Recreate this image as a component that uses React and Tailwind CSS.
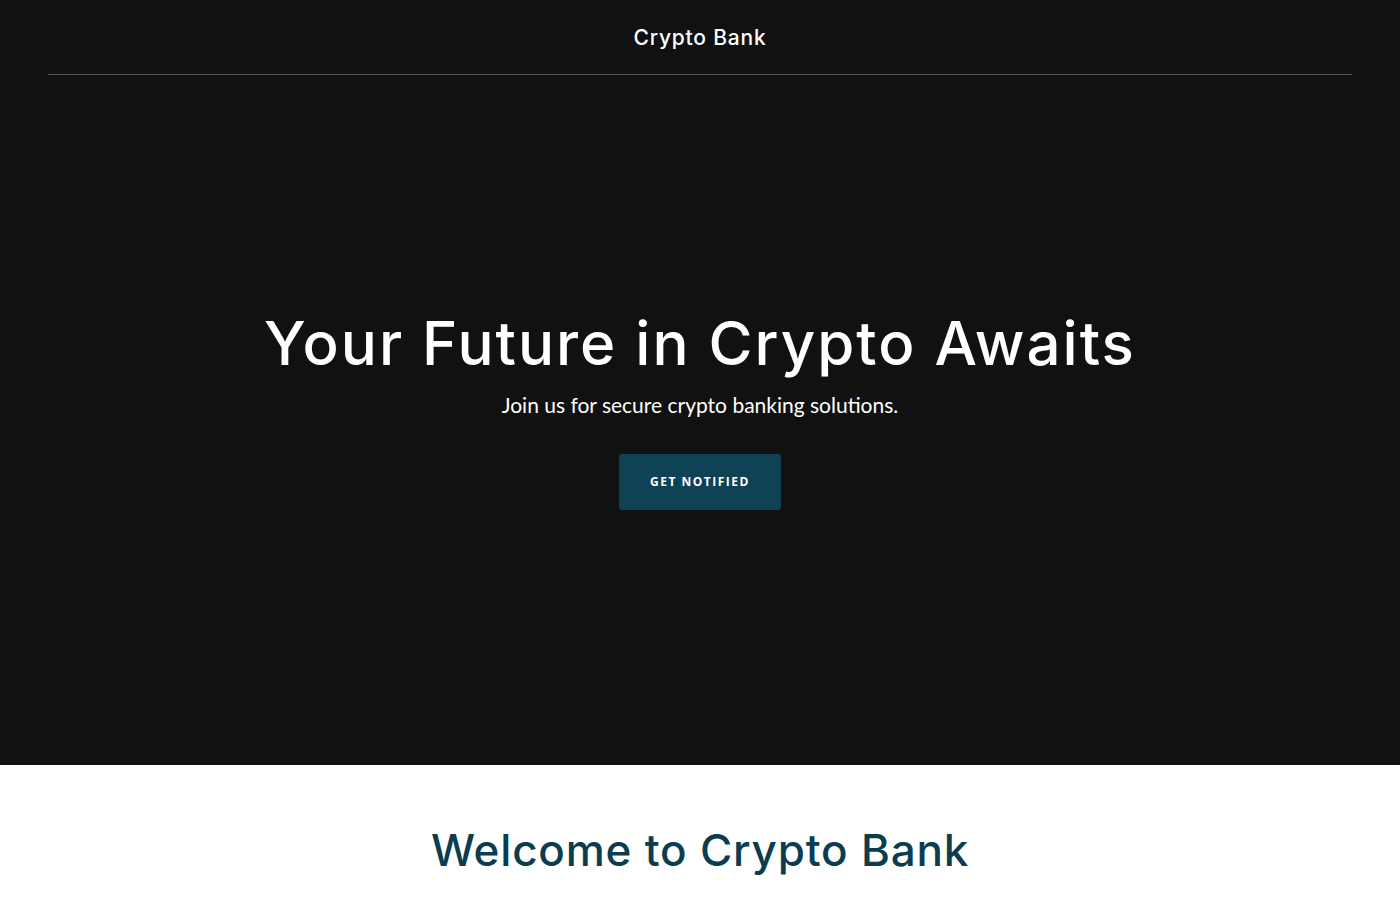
export default function App() {
  return (
    <div className="min-h-screen bg-white" style={{ fontFamily: '"Open Sans", sans-serif' }}>
      <section className="bg-[#111111] h-[765px] flex flex-col">
        <header className="mx-12 h-[75px] pt-[2px] flex items-center justify-center border-b border-[#555555]">
          <span className="text-white text-[21px] font-medium tracking-[0.8px]" style={{ fontFamily: 'Inter, sans-serif' }}>
            Crypto Bank
          </span>
        </header>
        <div className="flex-1 flex flex-col items-center justify-center pb-[17px]">
          <h1 className="text-white text-[60px] leading-none tracking-[2px] font-[450]" style={{ fontFamily: 'Inter, sans-serif' }}>
            Your Future in Crypto Awaits
          </h1>
          <p className="text-white text-[21px] mt-[16px]" style={{ fontFamily: 'Lato, sans-serif' }}>
            Join us for secure crypto banking solutions.
          </p>
          <button className="mt-[33px] w-[162px] h-[56px] rounded-[3px] bg-[#0f4254] text-white text-[12px] font-bold uppercase tracking-[1.5px]">
            Get Notified
          </button>
        </div>
      </section>
      <section className="pt-[63px] pb-10 flex justify-center">
        <h2 className="text-[#0b3d4f] text-[44px] leading-none tracking-[0.8px] font-[450]" style={{ fontFamily: 'Inter, sans-serif' }}>
          Welcome to Crypto Bank
        </h2>
      </section>
    </div>
  );
}
